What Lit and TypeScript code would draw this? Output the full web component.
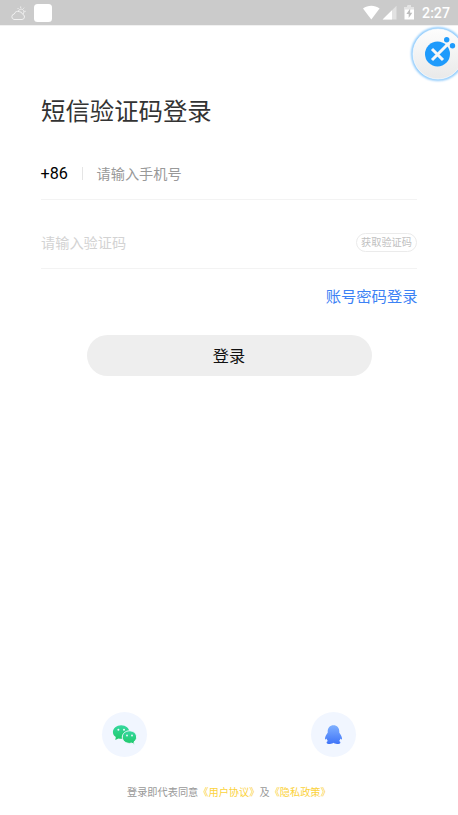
import { LitElement, html, css } from "lit";
import { customElement } from "lit/decorators.js";

@customElement("status-bar")
class StatusBar extends LitElement {
  static styles = css`
    :host { display: flex; height: 25px; flex: none; align-items: center; justify-content: space-between;
      background: #cbcbcb; border-bottom: 1px solid #f1f1f1; box-sizing: content-box; color: #fff; }
    .left { display: flex; align-items: center; padding-left: 10px; gap: 7px; }
    .app { width: 18px; height: 18px; border-radius: 3.5px; background: #fff; }
    .right { display: flex; align-items: center; padding-right: 8px; }
    svg { display: block; }
    .time { font: 500 14.2px/25px Roboto, sans-serif; margin-left: 5px; padding-top: 1px; }
  `;
  render() {
    return html`
      <div class="left">
        <svg width="17" height="16" viewBox="0 0 17 16" fill="none" stroke="#f1f1f1" stroke-width="1">
          <path d="M4 14.500h8a2.700 2.700 0 0 0 .5-5.300 3.200 3.200 0 0 0-3.200-2.500 3.500 3.500 0 0 0-5 2.300A2.800 2.800 0 0 0 4 14.500Z" />
          <path d="M8.500 5.900a2.800 2.800 0 1 1 4.600 3M7.600 3l.9 1M10.700 1.500v1.400M14.200 2.700l-.8 1M14.300 6.300h1.400" />
        </svg>
        <div class="app"></div>
      </div>
      <div class="right">
        <svg width="55" height="18" viewBox="0 0 55 18">
          <path d="M1 4.600C6 .9 12.600 .9 17.600 4.600L9.300 15.600Z" fill="#fff" />
          <path d="M34.500 1.700V15.600H20.600Z" fill="#e2e2e2" />
          <path d="M30 6.200V15.600H20.600Z" fill="#fff" />
          <path d="M45.500 1.500h3.500v1.600h3v12.500H42.500V3.100h3Z" fill="#fff" />
          <path d="M42.500 3.100h3V1.500h3.500v1.600h3v2.500H42.500Z" fill="#e4e4e4" />
          <path d="M48.200 4.600 44.400 10h2.300v4l3.600-5.300h-2.200Z" fill="#bdbdbd" />
        </svg>
        <span class="time">2:27</span>
      </div>
    `;
  }
}

@customElement("app-root")
class AppRoot extends LitElement {
  static styles = css`
    :host { display: flex; flex-direction: column; position: relative; width: 458px; height: 815px;
      overflow: hidden; background: #fff; font-family: Roboto, "Noto Sans CJK SC", sans-serif; }
    svg { display: block; }
    .assist { position: absolute; left: 408px; top: 24px; }
    .form { display: flex; flex-direction: column; padding: 0 41px; }
    h1 { margin: 67px 0 0; font-size: 24.4px; line-height: 38px; font-weight: 400; color: #333; }
    .row { display: flex; align-items: center; box-sizing: border-box; border-bottom: 1px solid #f3f3f3; font-size: 14.2px; }
    .phone { height: 52px; margin-top: 17px; }
    .code { height: 52px; margin-top: 17px; justify-content: space-between; color: #d3d3d3; }
    .prefix { font-size: 16.2px; color: #000; width: 41px; margin-left: -.5px; }
    .bar { width: 1px; height: 13px; background: #e5e5e5; margin-right: 14px; }
    .hint { color: #999; padding-bottom: 2px; }
    .sms { padding-bottom: 2px; }
    .get { box-sizing: border-box; width: 61px; height: 19px; border: 1px solid #ebebeb; border-radius: 10px;
      font-size: 10.2px; line-height: 18px; text-align: center; color: #bfbfbf; white-space: nowrap; }
    .switch { align-self: flex-end; margin: 16px -.5px 0 0; font-size: 15.3px; line-height: 24px; color: #3c82f5; }
    .login { width: 285px; height: 41px; margin: 26px auto 0; border-radius: 21px; background: #eee; color: #111;
      font-size: 16.2px; line-height: 43px; text-align: center; }
    .social { display: flex; justify-content: space-between; margin: auto 102px 0; }
    .round { width: 45px; height: 45px; border-radius: 50%; background: #f1f6ff; }
    .terms { margin: 26px 0 12px; padding-left: 127px; font-size: 10.2px; line-height: 20px; color: #999; white-space: nowrap; }
    .terms span { color: #fbd23c; }
  `;
  render() {
    return html`
      <status-bar></status-bar>
      <div class="form">
        <h1>短信验证码登录</h1>
        <div class="row phone">
          <span class="prefix">+86</span><i class="bar"></i><span class="hint">请输入手机号</span>
        </div>
        <div class="row code"><span class="sms">请输入验证码</span><span class="get">获取验证码</span></div>
        <div class="switch">账号密码登录</div>
        <div class="login">登录</div>
      </div>
      <div class="social">
        <div class="round">
          <svg width="45" height="45" viewBox="0 0 45 45">
            <defs>
              <linearGradient id="green" x1="0" y1="0" x2="0" y2="1">
                <stop offset="0" stop-color="#35d8a0" /><stop offset="1" stop-color="#1fc968" />
              </linearGradient>
            </defs>
            <path fill="url(#green)" d="M19.200 13.200c4.600 0 8.200 3 8.200 6.800s-3.600 6.800-8.200 6.800c-1 0-1.900-.1-2.700-.4L13.300 28l.5-2.900c-1.800-1.200-2.900-3-2.900-5.100 0-3.800 3.700-6.800 8.300-6.800Z" />
            <path fill="url(#green)" stroke="#f1f6ff" stroke-width="1" d="M27.500 18.800c4 0 7.100 2.800 7.100 6.300 0 2-1 3.700-2.600 4.800l.4 2.500-2.700-1.300c-.7.200-1.400.3-2.200.3-4 0-7.200-2.800-7.200-6.300s3.200-6.300 7.200-6.300Z" />
            <g fill="#f1f6ff">
              <circle cx="16.400" cy="17.700" r="1" /><circle cx="22" cy="17.700" r="1" />
              <circle cx="25" cy="23.500" r=".9" /><circle cx="30" cy="23.500" r=".9" />
            </g>
          </svg>
        </div>
        <div class="round">
          <svg width="45" height="45" viewBox="0 0 45 45">
            <defs>
              <linearGradient id="blue" x1="0" y1="0" x2="0" y2="1">
                <stop offset="0" stop-color="#7fb0ff" /><stop offset="1" stop-color="#3f74f8" />
              </linearGradient>
            </defs>
            <path fill="url(#blue)" d="M22.500 13.200c3.600 0 5.800 2.600 5.800 6.200v1.400c1.500 2 2.700 4.200 2.700 6 0 .9-.7 1-1.500-.2-.2.900-.7 1.700-1.300 2.400 1 .5 1.200 1 1.200 1.500 0 1-1.400 1.500-3.300 1.500-1.600 0-2.900-.5-3.600-1.200-.7.700-2 1.200-3.600 1.200-1.900 0-3.300-.5-3.300-1.500 0-.5.200-1 1.200-1.500-.6-.7-1.100-1.500-1.300-2.400-.8 1.200-1.500 1.100-1.500.2 0-1.800 1.200-4 2.700-6v-1.400c0-3.600 2.200-6.200 5.800-6.200Z" />
          </svg>
        </div>
      </div>
      <div class="terms">登录即代表同意<span>《用户协议》</span>及<span>《隐私政策》</span></div>
      <svg class="assist" width="60" height="60" viewBox="0 0 60 60">
        <defs>
          <linearGradient id="disc" x1="0" y1="0" x2="0" y2="1">
            <stop offset="0" stop-color="#fdfdfd" /><stop offset="1" stop-color="#e9e9e9" />
          </linearGradient>
          <filter id="glow" x="-20%" y="-20%" width="140%" height="140%"><feGaussianBlur stdDeviation="1.300" /></filter>
        </defs>
        <circle cx="30" cy="30" r="25.500" fill="none" stroke="#78c0fb" stroke-width="2.500" filter="url(#glow)" />
        <circle cx="30" cy="30" r="25" fill="url(#disc)" stroke="#fff" stroke-opacity=".6" stroke-width="1" />
        <circle cx="29.500" cy="30" r="12.500" fill="#1f9bfc" />
        <path d="M24 25l11 11M24 36 41 19" stroke="#f7f7f7" stroke-width="3" fill="none" />
        <circle cx="38.700" cy="15.800" r="2.700" fill="#1f9bfc" />
        <circle cx="44.500" cy="21.700" r="2.700" fill="#1f9bfc" />
      </svg>
    `;
  }
}
